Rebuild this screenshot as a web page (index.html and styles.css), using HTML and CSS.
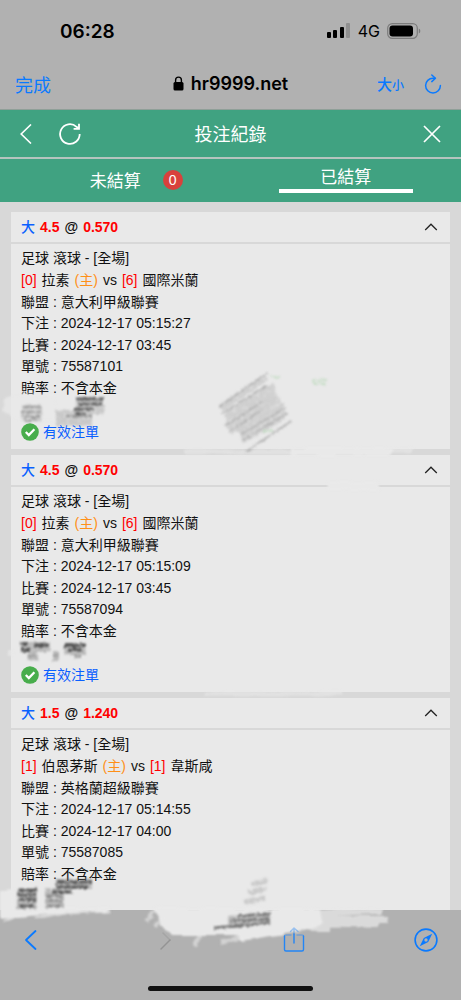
FILE: index.html
```html
<!DOCTYPE html>
<html lang="zh-Hant">

<head>
  <meta charset="UTF-8">
  <meta name="viewport" content="width=device-width, initial-scale=1.0">
  <title>投注紀錄</title>

  <link rel="stylesheet" href="styles.css">
</head>

<body>
  <div class="status-bar">
    <span class="clock">06:28</span>
    <div class="status-icons">
      <svg width="24" height="16" viewBox="0 0 24 16">
        <rect x="0" y="9" width="4" height="6" rx="1"/>
        <rect x="6" y="7" width="4" height="8" rx="1"/>
        <rect x="13" y="4" width="4" height="11" rx="1"/>
        <rect x="19" y="0" width="4" height="15" rx="1" fill="#8f8f8f"/>
      </svg>
      <span class="network">4G</span>
      <svg width="34" height="16" viewBox="0 0 34 16">
        <rect x="0.7" y="0.7" width="29.6" height="14.6" rx="4.6" fill="none" stroke="#7c7c7c" stroke-width="1.2"/>
        <rect x="2.5" y="2.5" width="23.5" height="11" rx="3"/>
        <path d="M31.8 5.5c2 .8 2 4.2 0 5z" fill="#7c7c7c"/>
      </svg>
    </div>
  </div>

  <div class="address-bar">
    <button type="button" class="done">完成</button>
    <div class="address">
      <svg width="11" height="15" viewBox="0 0 11 15">
        <rect x="0.5" y="6" width="10" height="8.5" rx="1.5"/>
        <path d="M2.6 7V4a2.9 2.9 0 0 1 5.8 0v3" fill="none" stroke="#000" stroke-width="1.4"/>
      </svg>
      <span>hr9999.net</span>
    </div>
    <div class="address-tools">
      <button type="button" class="text-size">大<small>小</small></button>
      <button type="button" aria-label="重新載入">
        <svg width="18" height="20" viewBox="0 0 18 20" fill="none" stroke="#0a7aff" stroke-width="1.5" stroke-linecap="round" stroke-linejoin="round">
          <path d="M11 4.2H9A7.4 7.4 0 1 0 16.4 11.6"/>
          <path d="M7.8 1l3.6 3.2-3.6 3.4"/>
        </svg>
      </button>
    </div>
  </div>

  <header class="title-bar">
    <div class="title-left">
      <button type="button" aria-label="返回">
        <svg width="12" height="20" viewBox="0 0 12 20" fill="none" stroke="#fff" stroke-width="1.6">
          <path d="M11 0.5L1.2 10l9.8 9.5"/>
        </svg>
      </button>
      <button type="button" aria-label="重新整理">
        <svg width="22" height="22" viewBox="0 0 22 22" fill="none" stroke="#fff" stroke-width="1.8">
          <path d="M20.7 11A9.8 9.8 0 1 1 17.5 3.8L19.6 5.4"/>
          <path d="M20 0.8V5.8H14.6"/>
        </svg>
      </button>
    </div>
    <h1>投注紀錄</h1>
    <div class="title-right">
      <button type="button" aria-label="關閉">
        <svg width="18" height="18" viewBox="0 0 18 18" fill="none" stroke="#fff" stroke-width="1.7">
          <path d="M1 1l16 16M17 1L1 17"/>
        </svg>
      </button>
    </div>
  </header>

  <nav class="tabs">
    <button type="button" class="tab"><span class="tab-text">未結算<span class="badge">0</span></span></button>
    <button type="button" class="tab active"><span class="tab-text">已結算</span></button>
  </nav>

  <main class="records">
    <article class="card">
      <div class="card-head">
        <h2><span class="blue">大</span> <span class="red">4.5</span> <span>@</span> <span class="red">0.570</span></h2>
        <button type="button" aria-label="收合">
          <svg width="14" height="8" viewBox="0 0 14 8" fill="none" stroke="#222" stroke-width="1.3"><path d="M1.2 7L7 1.2 12.8 7"/></svg>
        </button>
      </div>
      <div class="card-body">
        <p>足球 滾球 - [全場]</p>
        <p class="teams"><span class="red">[0]</span> <span>拉素</span> <span class="orange">(主)</span> <span>vs</span> <span class="red">[6]</span> <span>國際米蘭</span></p>
        <p>聯盟 : 意大利甲級聯賽</p>
        <p>下注 : 2024-12-17 05:15:27</p>
        <p>比賽 : 2024-12-17 03:45</p>
        <p>單號 : 75587101</p>
        <p>賠率 : 不含本金</p>
        <p class="result">
          <svg width="18" height="18" viewBox="0 0 18 18"><circle cx="9" cy="9" r="8.8" fill="#48ad4c"/><path d="M4.8 9l3 3 5.6-5.8" fill="none" stroke="#fff" stroke-width="2.3"/></svg>
          有效注單
        </p>
      </div>
    </article>

    <article class="card">
      <div class="card-head">
        <h2><span class="blue">大</span> <span class="red">4.5</span> <span>@</span> <span class="red">0.570</span></h2>
        <button type="button" aria-label="收合">
          <svg width="14" height="8" viewBox="0 0 14 8" fill="none" stroke="#222" stroke-width="1.3"><path d="M1.2 7L7 1.2 12.8 7"/></svg>
        </button>
      </div>
      <div class="card-body">
        <p>足球 滾球 - [全場]</p>
        <p class="teams"><span class="red">[0]</span> <span>拉素</span> <span class="orange">(主)</span> <span>vs</span> <span class="red">[6]</span> <span>國際米蘭</span></p>
        <p>聯盟 : 意大利甲級聯賽</p>
        <p>下注 : 2024-12-17 05:15:09</p>
        <p>比賽 : 2024-12-17 03:45</p>
        <p>單號 : 75587094</p>
        <p>賠率 : 不含本金</p>
        <p class="result">
          <svg width="18" height="18" viewBox="0 0 18 18"><circle cx="9" cy="9" r="8.8" fill="#48ad4c"/><path d="M4.8 9l3 3 5.6-5.8" fill="none" stroke="#fff" stroke-width="2.3"/></svg>
          有效注單
        </p>
      </div>
    </article>

    <article class="card">
      <div class="card-head">
        <h2><span class="blue">大</span> <span class="red">1.5</span> <span>@</span> <span class="red">1.240</span></h2>
        <button type="button" aria-label="收合">
          <svg width="14" height="8" viewBox="0 0 14 8" fill="none" stroke="#222" stroke-width="1.3"><path d="M1.2 7L7 1.2 12.8 7"/></svg>
        </button>
      </div>
      <div class="card-body">
        <p>足球 滾球 - [全場]</p>
        <p class="teams"><span class="red">[1]</span> <span>伯恩茅斯</span> <span class="orange">(主)</span> <span>vs</span> <span class="red">[1]</span> <span>韋斯咸</span></p>
        <p>聯盟 : 英格蘭超級聯賽</p>
        <p>下注 : 2024-12-17 05:14:55</p>
        <p>比賽 : 2024-12-17 04:00</p>
        <p>單號 : 75587085</p>
        <p>賠率 : 不含本金</p>
      </div>
    </article>
  </main>

  <footer class="browser-bar">
    <div class="browser-tools">
      <button type="button" aria-label="上一頁">
        <svg width="24" height="24" viewBox="0 0 24 24" fill="none" stroke="#0a7aff" stroke-width="1.8" stroke-linecap="round" stroke-linejoin="round"><path d="M16.5 3L7 12l9.5 9"/></svg>
      </button>
      <button type="button" aria-label="下一頁">
        <svg width="24" height="24" viewBox="0 0 24 24" fill="none" stroke="#949494" stroke-width="1.5" stroke-linecap="round" stroke-linejoin="round"><path opacity="0.4" d="M12 5l7 7"/><path d="M19 12l-9 9"/></svg>
      </button>
      <button type="button" class="share" aria-label="分享">
        <svg width="24" height="28" viewBox="0 0 24 28" fill="none" stroke="#2385f5" stroke-width="1.4" stroke-linecap="round" stroke-linejoin="round"><path d="M2.5 10v13.5Q2.5 25 4 25h16q1.500 0 1.500-1.500V10M12 17V8"/><path opacity="0.4" d="M9 9H4q-1.500 0-1.500 1.500M21.500 10.500Q21.500 9 20 9h-5M12 8V3M8.500 5.500L12 2l4 3.500"/></svg>
      </button>
      <button type="button" aria-label="在瀏覽器開啟">
        <svg width="24" height="24" viewBox="0 0 24 24"><circle cx="12" cy="12" r="10.9" fill="none" stroke="#0a7aff" stroke-width="1.6"/><path fill="#0a7aff" fill-rule="evenodd" d="M18.2 5.8L14.2 14 5.8 18.2 9.8 10zM12 10.3a1.7 1.7 0 1 0 0 3.4 1.7 1.7 0 0 0 0-3.4z"/></svg>
      </button>
    </div>
    <div class="home-bar"></div>
  </footer>

  <!-- pencil marks over the amounts -->
  <svg class="marks" viewBox="0 0 461 1000" fill="none" aria-hidden="true">
    <defs>
      <filter id="pencil" filterUnits="userSpaceOnUse" x="0" y="360" width="461" height="600">
        <feTurbulence type="fractalNoise" baseFrequency="0.3" numOctaves="2" seed="4" result="noise"/>
        <feDisplacementMap in="SourceGraphic" in2="noise" scale="4" xChannelSelector="R" yChannelSelector="G" result="rough"/>
        <feColorMatrix in="noise" type="matrix" values="0 0 0 0 0  0 0 0 0 0  0 0 0 0 0  0 0 0 2 0" result="grain"/>
        <feComposite in="rough" in2="grain" operator="in"/>
        <feGaussianBlur stdDeviation="0.9"/>
      </filter>
      <filter id="eraser" filterUnits="userSpaceOnUse" x="0" y="360" width="461" height="620">
        <feTurbulence type="fractalNoise" baseFrequency="0.04 0.15" numOctaves="3" seed="9" result="noise"/>
        <feDisplacementMap in="SourceGraphic" in2="noise" scale="6" xChannelSelector="R" yChannelSelector="G"/>
        <feGaussianBlur stdDeviation="1"/>
      </filter>
    </defs>

    <g filter="url(#eraser)" stroke="#e9e9e9" fill="#e9e9e9">
      <path stroke="none" d="M4 398L54 394 58 422 20 420 2 412z" opacity="0.8"/>
      <path d="M21 395H54" stroke-width="3" opacity="0.7"/>
      <path d="M290 452H392M328 486H378" stroke-width="8"/>
      <path d="M184 452H300M390 450H412" stroke-width="5" opacity="0.6"/>
      <path d="M10 650V656" stroke-width="6" opacity="0.7"/>
      <path d="M205 694H320M320 693H342" stroke-width="5" opacity="0.6"/>
      <path stroke="none" d="M-4 891L14 887V908H110L106 912 60 913 20 917-4 918z"/>
      <path d="M4 921L22 913M34 918L66 912M70 913L110 911" stroke-width="3" opacity="0.7"/>
      <path stroke="none" d="M152 908H320L322 926 300 932 270 936 242 941 238 935 172 935 160 922z"/>
      <path d="M153 910L147 922M162 915L156 926" stroke-width="4" opacity="0.6"/>
      <path d="M314 913L382 911M316 918L388 919M314 923L378 925M310 929L330 929" stroke-width="6" opacity="0.75"/>
      <path d="M220 942L242 936M200 934L195 947" stroke-width="4" opacity="0.6"/>
    </g>

    <g filter="url(#pencil)">
      <path stroke="#c8c8c8" stroke-width="7" d="M221 408L266 377M226 413L274 386M226 419L276 393M226 426L280 399M230 431L284 406M240 434L286 411M242 440L284 416" opacity="0.8"/>
      <path stroke="#b4b4b4" stroke-width="2" stroke-linecap="round" d="M219 407L267 373M223 413L266 386M226 425L262 402M229 432L262 410M242 434L285 408M243 440L286 414M247 451L291 421"/>
      <path stroke="#999" stroke-width="16" opacity="0.4" d="M22 413H42M56 418H92M76 406H104"/>
      <path stroke="#606060" stroke-width="3" d="M76 399H104M78 404H102M74 409H95M75 414H86"/>
      <path stroke="#999" stroke-width="2" d="M23 407H40M22 412H41M23 417H40M25 421H38M66 416H92"/>
      <path stroke="#888" stroke-width="10" opacity="0.5" d="M20 647H50M28 655H38M64 650H86M53 656H59"/>
      <path stroke="#555" stroke-width="4" d="M20 644H28M20 650H30M33 645H48M64 645H86M68 650H82"/>
      <path stroke="#999" stroke-width="3" d="M28 656H36M53 655H58M74 656H82"/>
      <path stroke="#888" stroke-width="20" opacity="0.55" d="M17 899H37M45 898H64"/>
      <path stroke="#777" stroke-width="10" opacity="0.5" d="M56 884H92"/>
      <path stroke="#555" stroke-width="3" d="M57 882H92M56 887H88M52 892H72M18 890H37M17 895H36M19 900H36M20 906H34"/>
      <path stroke="#888" stroke-width="2" d="M46 896H62M45 901H63M47 906H61"/>
      <path stroke="#c2c2c2" stroke-width="5" opacity="0.8" d="M252 884L267 881M248 893L266 889M244 902L265 898"/>
      <path stroke="#aaa" stroke-width="12" opacity="0.7" d="M228 922L270 918"/>
      <path stroke="#777" stroke-width="3" d="M238 916L270 914M230 921L270 919M214 928L270 923"/>
    </g>

    <g filter="url(#pencil)" stroke="#b4d8b4" stroke-width="2" opacity="0.6">
      <path d="M312 381L327 380M313 384H326M270 377H280M263 431H273"/>
    </g>
  </svg>
</body>

</html>
```

FILE: styles.css
```css
* {
  box-sizing: border-box;
}

body {
  margin: 0;
  height: 100vh;
  display: flex;
  flex-direction: column;
  position: relative;
  overflow: hidden;
  background: #d8d8d8;
  color: #111;
  font-family: "Liberation Sans", "Noto Sans CJK TC", sans-serif;
}

h1, h2, p {
  margin: 0;
  font-weight: normal;
}

button {
  display: flex;
  align-items: center;
  justify-content: center;
  padding: 0;
  border: 0;
  background: none;
  color: inherit;
  font: inherit;
}

svg {
  display: block;
  flex: none;
}

/* phone status */
.status-bar {
  display: flex;
  justify-content: space-between;
  align-items: center;
  height: 62px;
  padding: 0 40px 0 60px;
  background: #b1b1b1;
  color: #000;
  font-family: Inter, sans-serif;
}

.clock {
  font-size: 19px;
  font-weight: 600;
}

.status-icons {
  display: flex;
  align-items: center;
  gap: 7px;
}

.network {
  font-size: 16px;
}

/* address bar */
.address-bar {
  display: grid;
  grid-template-columns: 1fr auto 1fr;
  align-items: center;
  height: 48px;
  padding: 0 15px 4px;
  background: #b1b1b1;
  border-bottom: 1px solid #8f9f98;
  color: #0a7aff;
}

.done {
  justify-self: start;
  font-size: 18px;
}

.address {
  display: flex;
  align-items: center;
  gap: 7px;
  color: #000;
  font-family: Inter, sans-serif;
  font-size: 18px;
  font-weight: 600;
}

.address-tools {
  display: flex;
  justify-content: flex-end;
  align-items: center;
  gap: 20px;
  padding-right: 4px;
}

.text-size {
  align-items: baseline;
  font-size: 15px;
  font-weight: 500;
}

.text-size small {
  font-size: 12px;
}

/* green header */
.title-bar {
  display: grid;
  grid-template-columns: 1fr auto 1fr;
  align-items: center;
  height: 49px;
  padding: 0 20px;
  background: #40a281;
  border-bottom: 2px solid #b5c4be;
  color: #fff;
}

.title-bar h1 {
  padding-bottom: 2px;
  font-size: 18px;
}

.title-left {
  display: flex;
  align-items: center;
  gap: 27px;
}

.title-right {
  justify-self: end;
}

.tabs {
  display: flex;
  height: 43px;
  background: #40a281;
  color: #fff;
  font-size: 17px;
}

.tab {
  flex: 1;
  padding-bottom: 2px;
}

.tab-text {
  position: relative;
}

.badge {
  position: absolute;
  left: 73px;
  top: 3px;
  width: 20px;
  height: 20px;
  border-radius: 50%;
  background: #d9413c;
  font-size: 14px;
  line-height: 20px;
  text-align: center;
}

.active {
  align-items: flex-start;
}

.active .tab-text {
  width: 58%;
  padding: 4px 0 1px;
  border-bottom: 4px solid #fff;
}

/* bet records */
.records {
  flex: 1;
  min-height: 0;
  overflow: hidden;
  display: flex;
  flex-direction: column;
  gap: 6px;
  padding: 10px 11px 0;
}

.card {
  flex: none;
  background: #e9e9e9;
  font-size: 14px;
}

.card:last-child {
  flex: 1 0 auto;
}

.card-head {
  display: flex;
  justify-content: space-between;
  align-items: center;
  height: 32px;
  padding: 0 12px 1px 10px;
  border-bottom: 2px solid #d8d8d8;
}

.card-head h2 {
  display: flex;
  align-items: baseline;
  gap: 5px;
  font-size: 14px;
  font-weight: bold;
  line-height: 22px;
}

.card-head .blue {
  font-weight: 500;
}

.card-body {
  padding: 3px 10px 6px;
  line-height: 22px;
}

.card-body p:nth-child(4),
.card-body p:nth-child(6) {
  line-height: 21px;
}

.teams {
  display: flex;
  gap: 5px;
}

.result {
  display: flex;
  align-items: center;
  gap: 4px;
  color: #0a60ff;
}

.card-body .result {
  margin-top: 22px;
}

.blue {
  color: #0a60ff;
}

.red {
  color: #ff0000;
}

.orange {
  color: #ff9017;
}

/* bottom browser bar */
.browser-bar {
  display: flex;
  flex-direction: column;
  justify-content: space-between;
  height: 90px;
  padding: 16px 0 9px;
  background: #b1b1b1;
}

.browser-tools {
  display: flex;
  justify-content: space-between;
  align-items: center;
  padding: 0 23px 0 19px;
}

.share {
  position: relative;
  z-index: 1;
}

.home-bar {
  align-self: center;
  width: 36%;
  height: 5px;
  border-radius: 3px;
  background: #111;
}

.marks {
  position: absolute;
  top: 0;
  left: 0;
  width: 100%;
  pointer-events: none;
}
```
